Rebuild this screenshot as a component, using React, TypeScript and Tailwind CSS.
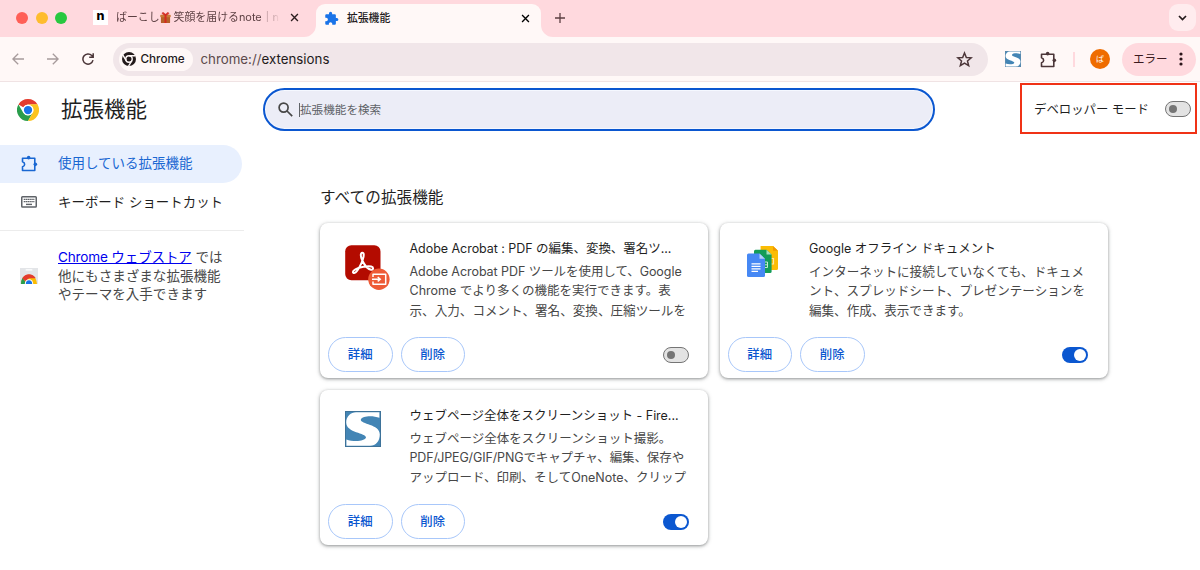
import React from "react";

const ChromeLogo = ({ className }: { className: string }) => (
  <svg viewBox="0 0 48 48" className={className}>
    <circle cx="24" cy="24" r="24" fill="#fff" />
    <path d="M24 0A24 24 0 0 1 44.8 12H24A12 12 0 0 0 13.6 18L3.2 12A24 24 0 0 1 24 0Z" fill="#e33b2e" />
    <path d="M3.2 12A24 24 0 0 0 24 48L34.4 30A12 12 0 0 1 13.6 30Z" fill="#2a9d4b" />
    <path d="M44.8 12A24 24 0 0 1 24 48L34.4 30A12 12 0 0 0 34.4 18L30 12Z" fill="#fcc31e" />
    <path d="M24 12H44.8A24 24 0 0 1 45 13L33 16Z" fill="#fcc31e" />
    <circle cx="24" cy="24" r="11.5" fill="#fff" />
    <circle cx="24" cy="24" r="9" fill="#1a73e8" />
  </svg>
);

const ChromeMono = () => (
  <svg viewBox="0 0 24 24" className="size-[14px] shrink-0">
    <circle cx="12" cy="12" r="12" fill="#231a1b" />
    <circle cx="12" cy="12" r="5.5" fill="none" stroke="#fff8f7" strokeWidth="2.4" />
    <path d="M12 6.4H23M7.2 14.9L1.6 5.2M16.8 14.9L11.3 24" stroke="#fff8f7" strokeWidth="2.4" fill="none" />
  </svg>
);

const PuzzleOutline = ({ className }: { className: string }) => (
  <svg viewBox="0 0 18 18" className={className}>
    <path
      d="M1.6 3.4H14.6V16.4H1.6V12.6C4.6 11.8 4.6 8 1.6 7.2Z"
      fill="none"
      stroke="currentColor"
      strokeWidth="1.7"
      strokeLinejoin="round"
    />
    <circle cx="8.1" cy="2.8" r="1.9" fill="currentColor" />
    <circle cx="15.2" cy="9.9" r="1.9" fill="currentColor" />
  </svg>
);

const PuzzleSolid = () => (
  <svg viewBox="0 0 24 24" className="size-[15px] shrink-0" fill="#1a73e8">
    <path d="M20.5 11H19V7c0-1.1-.9-2-2-2h-4V3.5a2.5 2.5 0 0 0-5 0V5H4c-1.1 0-1.99.9-1.99 2v3.8H3.5c1.49 0 2.7 1.21 2.7 2.7s-1.21 2.7-2.7 2.7H2V20c0 1.1.9 2 2 2h3.8v-1.5c0-1.49 1.21-2.7 2.7-2.7s2.7 1.21 2.7 2.7V22H17c1.1 0 2-.9 2-2v-4h1.5a2.5 2.5 0 0 0 0-5z" />
  </svg>
);

const Close = ({ className }: { className: string }) => (
  <svg viewBox="0 0 10 10" className={className} fill="none" stroke="currentColor" strokeWidth="1.5">
    <path d="M1.2 1.2L8.8 8.8M8.8 1.2L1.2 8.8" />
  </svg>
);

const Gift = () => (
  <svg viewBox="0 0 12 12" className="size-[11px] shrink-0">
    <rect x="1" y="4" width="10" height="8" rx=".6" fill="#b5622a" />
    <rect x=".4" y="3" width="11.2" height="2.6" rx=".5" fill="#c97a35" />
    <rect x="4.9" y="3" width="2.2" height="9" fill="#d42a20" />
    <path d="M6 3.2C2 3.4 1.6 .4 3.4 .5S6 3.2 6 3.2C6 3.2 7 .4 8.7 .5S10 3.4 6 3.2Z" fill="#e5342a" stroke="#b81e16" strokeWidth=".5" />
  </svg>
);

const FireShot = ({ className }: { className: string }) => (
  <svg viewBox="0 0 36 36" className={className}>
    <rect x=".5" y=".5" width="35" height="35" fill="#4385b5" stroke="#3d7299" />
    <path
      d="M34.4 1.2V6.8C28 4.4 17.4 4.6 15.8 8.6C15.4 13.6 34.8 13 34.8 23.5C34.8 30 31 34.8 25 34.8H1.4V28.4C8 31 20 30.6 21 26.6C21.4 21.8 1.2 22 1.2 11.5C1.2 5 6 1.2 11 1.2Z"
      fill="#fff"
    />
  </svg>
);

const Acrobat = () => (
  <svg viewBox="0 0 46 46" className="h-[46px] w-[46px]">
    <rect x=".2" y=".2" width="35.3" height="35" rx="6.2" fill="#b30b00" />
    <path
      d="M17.3 7.8C15.2 7.8 15.5 11.6 17.2 15.2C19.2 19.5 23 24 26 24.8C28.4 25.3 29 22.2 26.2 21.5C22.5 20.6 14.5 22.2 10.4 24.3C6.8 26.1 7.6 28.6 9.6 27.9C12.5 26.8 16.3 19.2 17.9 14.2C19 10.6 19.2 7.8 17.3 7.8Z"
      fill="none"
      stroke="#fff"
      strokeWidth="2"
    />
    <circle cx="33.9" cy="34.2" r="10.7" fill="#ee5b36" />
    <path d="M28 31.9V29.2H40.7V39.2H28V36.6" fill="none" stroke="#fff" strokeWidth="1.5" strokeLinejoin="round" />
    <path d="M27 34.2H34.7M32.7 32L35.3 34.2L32.7 36.4" fill="none" stroke="#fff" strokeWidth="1.4" />
  </svg>
);

const Docs = () => (
  <svg viewBox="0 0 32 32" className="h-8 w-8">
    <path d="M13.6 1H26L31 5.8V23.5Q31 25 29.5 25H15Q13.6 25 13.6 23.5Z" fill="#fbbc04" />
    <path d="M26 1L31 5.8H26Z" fill="#f29900" />
    <path d="M22 13.5H26.5V19H22Z" fill="none" stroke="#fde7a5" strokeWidth="1.2" />
    <path d="M8.4 4.8H19.5L24.6 9.6V26.5Q24.6 28 23.1 28H8.4Q7 28 7 26.5V6.3Q7 4.8 8.4 4.8Z" fill="#149c58" />
    <path d="M19.5 4.8L24.6 9.6H19.5Z" fill="#a5dfc0" />
    <path d="M16 17H20.5V22.5H16M16 19.8H20.5" fill="none" stroke="#c5e9d5" strokeWidth="1" />
    <path d="M1.5 8.5H12.5L18 13.8V30.5Q18 32 16.5 32H1.5Q0 32 0 30.5V10Q0 8.5 1.5 8.5Z" fill="#4688f4" />
    <path d="M12.5 8.5L18 13.8H12.5Z" fill="#b5d0fb" />
    <path d="M4.5 18.8H13.5M4.5 21.3H13.5M4.5 23.8H13.5M4.5 26.3H11" stroke="#fff" strokeWidth="1.2" />
  </svg>
);

const Keyboard = () => (
  <svg viewBox="0 0 16 12" className="h-3 w-4 shrink-0">
    <rect x=".75" y=".75" width="14.5" height="10.2" rx=".8" fill="none" stroke="#5f6368" strokeWidth="1.5" />
    <path d="M2.7 3.4H13.4M2.7 5.6H13.4" stroke="#5f6368" strokeWidth="1.3" strokeDasharray="1.5 .4" />
    <path d="M5 8.4H11" stroke="#5f6368" strokeWidth="1.4" />
  </svg>
);

const WebStore = () => (
  <svg viewBox="0 0 18 16" className="h-4 w-[18px] shrink-0">
    <path d="M0 0H18V16H0Z" fill="#e3e5e8" />
    <rect x="5.5" y="1.2" width="7" height="1.4" rx=".7" fill="#fff" />
    <path d="M1 16A8 9.6 0 0 1 17 16Z" fill="#fbbc04" />
    <path d="M1 16A8 9.6 0 0 1 2.6 9.8L7 16Z" fill="#2a9d4b" />
    <path d="M2.3 10.2A8 8.8 0 0 1 15.7 10.2H9L5.5 13.4Z" fill="#e33b2e" />
    <path d="M4.8 16A4.2 4.8 0 0 1 13.2 16Z" fill="#fff" />
    <path d="M5.8 16A3.2 3.8 0 0 1 12.2 16Z" fill="#1a73e8" />
  </svg>
);

const Toggle = ({ on }: { on: boolean }) =>
  on ? (
    <div className="flex h-4 w-[26px] items-center justify-end rounded-full bg-[#0b57d0] pr-[2px]">
      <div className="size-3 rounded-full bg-white" />
    </div>
  ) : (
    <div className="flex h-4 w-[26px] items-center rounded-full border border-[#757575] bg-[#e3e3e3] pl-[3px]">
      <div className="size-2 rounded-full bg-[#757575]" />
    </div>
  );

const PillButton = ({ label }: { label: string }) => (
  <button className="flex h-[35px] w-[64.5px] items-center justify-center rounded-full border border-[#a8c7fa] pt-[2px] text-[12.4px] font-medium text-[#0b57d0]">
    {label}
  </button>
);

type Line = { text: string; cls: string };

const Card = ({ icon, title, lines, on }: { icon: React.ReactNode; title: Line; lines: Line[]; on: boolean }) => (
  <article className="flex h-[155px] w-[388px] flex-col justify-between rounded-[8px] bg-white shadow-[0_1px_3px_rgba(60,64,67,0.45),0_1px_5px_rgba(60,64,67,0.2)]">
    <div className="flex pt-4 pl-[25px]">
      <div className="w-[64.5px] shrink-0 pt-[6px]">{icon}</div>
      <div className="whitespace-nowrap">
        <h3 className={`h-[23px] leading-[19px] text-[#1f1f1f] ${title.cls}`}>{title.text}</h3>
        {lines.map((l) => (
          <p key={l.text} className={`h-[19.3px] leading-[19.3px] text-[#474747] ${l.cls}`}>
            {l.text}
          </p>
        ))}
      </div>
    </div>
    <div className="flex items-center gap-2 pr-[19.5px] pb-[6px] pl-2">
      <PillButton label="詳細" />
      <PillButton label="削除" />
      <div className="ml-auto">
        <Toggle on={on} />
      </div>
    </div>
  </article>
);

export default function App() {
  return (
    <div className="flex h-[570px] w-[1200px] flex-col overflow-hidden bg-white font-['Inter','Noto_Sans_CJK_JP',sans-serif] text-[#1f1f1f]">
      <header className="shrink-0">
        <div className="flex h-[37px] items-end bg-[#ffd9de]">
          <div className="flex h-full w-[93px] items-center gap-[7.5px] pb-[2px] pl-4">
            <span className="size-3 rounded-full bg-[#ff5f57]" />
            <span className="size-3 rounded-full bg-[#febc2e]" />
            <span className="size-3 rounded-full bg-[#28c840]" />
          </div>
          <div className="flex h-full w-[211px] items-center pb-[2px]">
            <span className="flex size-[15px] items-center justify-center bg-white pb-[2px] text-[12.5px] leading-none font-extrabold text-black">n</span>
            <div className="ml-[8px] flex w-[164px] items-center overflow-hidden text-[10.9px] whitespace-nowrap text-[#5c3f42] [mask-image:linear-gradient(to_right,black_88%,transparent)]">
              <span>ばーこし</span>
              <Gift />
              <span className="ml-[3px]">笑顔を届けるnote｜n</span>
            </div>
            <Close className="ml-[10px] size-[9px] shrink-0 text-[#2b1d1e]" />
          </div>
          <div className="flex h-full items-end">
            <svg viewBox="0 0 12 12" className="size-3 text-[#fff8f7]" fill="currentColor">
              <path d="M12 0V12H0A12 12 0 0 0 12 0Z" />
            </svg>
            <div className="flex h-[33px] w-[225px] items-center rounded-t-[9px] bg-[#fff8f7] pr-[11px] pb-[5px] pl-2">
              <PuzzleSolid />
              <span className="ml-2 pt-[2px] text-[10.8px] font-medium text-[#231a1b]">拡張機能</span>
              <Close className="ml-auto size-[9px] text-black" />
            </div>
            <svg viewBox="0 0 12 12" className="size-3 text-[#fff8f7]" fill="currentColor">
              <path d="M0 0V12H12A12 12 0 0 1 0 0Z" />
            </svg>
          </div>
          <div className="flex h-full flex-1 items-center justify-between pr-1 pb-[2px] pl-[2px]">
            <svg viewBox="0 0 10 10" className="size-[10px] text-[#5c3f42]" fill="none" stroke="currentColor" strokeWidth="1.3">
              <path d="M5 0V10M0 5H10" />
            </svg>
            <div className="flex size-[27px] items-center justify-center rounded-[9px] bg-[#ffecee]">
              <svg viewBox="0 0 9 6" className="h-[6px] w-[9px]" fill="none" stroke="#231a1b" strokeWidth="1.7">
                <path d="M1 1L4.5 4.5L8 1" />
              </svg>
            </div>
          </div>
        </div>
        <div className="flex h-[45px] items-center border-b border-[#f0e3e4] bg-[#fff8f7] pr-1">
          <div className="flex w-[113px] items-center gap-[23px] pl-[11.5px]">
            <svg viewBox="0 0 12 12" className="size-3 text-[#a79b9c]" fill="none" stroke="currentColor" strokeWidth="1.3">
              <path d="M12 6H1M6.2 .7L.9 6L6.2 11.3" />
            </svg>
            <svg viewBox="0 0 12 12" className="size-3 text-[#a79b9c]" fill="none" stroke="currentColor" strokeWidth="1.3">
              <path d="M0 6H11M5.8 .7L11.1 6L5.8 11.3" />
            </svg>
            <svg viewBox="0 0 12 12" className="size-3 text-[#4c3639]" fill="none" stroke="currentColor" strokeWidth="1.5">
              <path d="M11 7.2A5.1 5.1 0 1 1 9.8 2.6L11 4M11.2 .2V4.3H7.2" />
            </svg>
          </div>
          <div className="flex h-[33px] w-[875px] items-center rounded-full bg-[#f1e6e9] pr-[15px] pl-[6px]">
            <div className="flex h-[23px] w-[74px] items-center gap-[4.5px] rounded-full bg-[#fff8f7] pl-[3px]">
              <ChromeMono />
              <span className="pt-[2px] text-[11.7px] font-medium text-[#231a1b]">Chrome</span>
            </div>
            <span className="ml-[7.5px] pt-[1px] text-[13.3px] whitespace-nowrap text-[#5c4a4c]">
              chrome://<span className="text-[#231a1b]">extensions</span>
            </span>
            <svg viewBox="0 0 24 24" className="ml-auto size-[17px] text-[#4c3639]" fill="none" stroke="currentColor" strokeWidth="2.1">
              <path d="M12 2.8L14.6 9.2L21.5 9.7L16.2 14.1L17.9 20.8L12 17.1L6.1 20.8L7.8 14.1L2.5 9.7L9.4 9.2Z" />
            </svg>
          </div>
          <FireShot className="ml-[17px] size-4 shrink-0" />
          <PuzzleOutline className="ml-[19px] size-[17px] shrink-0 text-[#4c3639]" />
          <span className="ml-[16px] h-[15px] w-[2px] shrink-0 bg-[#ffd9de]" />
          <span className="ml-[15px] flex size-5 shrink-0 items-center justify-center rounded-full bg-[#ef6c00] text-[8px] text-white">ば</span>
          <div className="ml-auto flex h-[33px] w-[74px] shrink-0 items-center justify-between rounded-full bg-[#ffd9de] pr-[13px] pl-[11px]">
            <span className="pt-[1px] text-[11.5px] whitespace-nowrap text-[#3b1a20]">エラー</span>
            <svg viewBox="0 0 4 14" className="h-[14px] w-1" fill="#2b151a">
              <circle cx="2" cy="2" r="1.6" />
              <circle cx="2" cy="7" r="1.6" />
              <circle cx="2" cy="12" r="1.6" />
            </svg>
          </div>
        </div>
      </header>

      <div className="flex h-[55px] shrink-0">
        <div className="flex w-[263px] items-center pl-[17px]">
          <ChromeLogo className="size-[22px]" />
          <h1 className="ml-[22px] pt-[1px] text-[21.5px] leading-none">拡張機能</h1>
        </div>
        <div className="mt-[6px] flex h-[43px] w-[672px] items-center rounded-full border-2 border-[#0b57d0] bg-[#ecedf7] pl-[13px] shadow-[inset_0_0_0_1px_#f5f8ff]">
          <svg viewBox="0 0 15 15" className="size-[15px] text-[#474747]" fill="none" stroke="currentColor" strokeWidth="1.7">
            <circle cx="5.6" cy="5.6" r="4.5" />
            <path d="M9 9L14.2 14.2" />
          </svg>
          <span className="ml-[6px] h-[14px] w-px bg-[#5f6368]" />
          <span className="pt-[2px] text-[11.6px] text-[#5f6368]">拡張機能を検索</span>
        </div>
        <div className="mt-[1px] ml-[85px] flex h-[51px] w-[177px] items-center justify-between border-2 border-[#f03216] pr-[4px] pl-3">
          <span className="pt-[3px] text-[12.4px] whitespace-nowrap">デベロッパー モード</span>
          <div className="pt-px">
            <Toggle on={false} />
          </div>
        </div>
      </div>

      <div className="flex flex-1">
        <nav className="w-[320px] shrink-0 pt-2 whitespace-nowrap">
          <div className="flex h-[38px] w-[242px] items-center rounded-r-full bg-[#e8f0fe] pb-[2px] pl-[21px] text-[#1967d2]">
            <PuzzleOutline className="size-[17px]" />
            <span className="ml-5 text-[13.5px]">使用している拡張機能</span>
          </div>
          <div className="flex h-[38px] items-center pl-[21px]">
            <Keyboard />
            <span className="ml-[21px] text-[13.45px] text-[#1f1f1f]">キーボード ショートカット</span>
          </div>
          <div className="mt-[9px] w-[244px] border-t border-[#ececec]" />
          <div className="mt-[17px] flex items-center pl-5">
            <WebStore />
            <p className="ml-5 text-[13.55px] leading-[18.5px] text-[#474747]">
              <a className="tracking-[-0.16px] text-[#0000ee] underline">Chrome ウェブストア</a> では
              <br />
              他にもさまざまな拡張機能
              <br />
              やテーマを入手できます
            </p>
          </div>
        </nav>
        <main className="pt-[51px]">
          <h2 className="h-[35px] text-[15.6px] leading-[20px] tracking-[0.06px]">すべての拡張機能</h2>
          <div className="grid grid-cols-[388px_388px] gap-x-[11.5px] gap-y-3">
            <Card
              icon={<Acrobat />}
              on={false}
              title={{ text: "Adobe Acrobat : PDF の編集、変換、署名ツ...", cls: "text-[12.5px] tracking-[-0.04px]" }}
              lines={[
                { text: "Adobe Acrobat PDF ツールを使用して、Google", cls: "text-[12.5px] tracking-[-0.06px]" },
                { text: "Chrome でより多くの機能を実行できます。表", cls: "text-[12.5px]" },
                { text: "示、入力、コメント、署名、変換、圧縮ツールを", cls: "text-[12.58px]" },
              ]}
            />
            <Card
              icon={<div className="pl-[2px]"><Docs /></div>}
              on
              title={{ text: "Google オフライン ドキュメント", cls: "text-[12.5px]" }}
              lines={[
                { text: "インターネットに接続していなくても、ドキュメ", cls: "text-[12.58px]" },
                { text: "ント、スプレッドシート、プレゼンテーションを", cls: "text-[12.58px]" },
                { text: "編集、作成、表示できます。", cls: "text-[12.55px]" },
              ]}
            />
            <Card
              icon={<FireShot className="-mt-px size-[36px]" />}
              on
              title={{ text: "ウェブページ全体をスクリーンショット - Fire...", cls: "text-[12.5px] tracking-[-0.03px]" }}
              lines={[
                { text: "ウェブページ全体をスクリーンショット撮影。", cls: "text-[12.5px]" },
                { text: "PDF/JPEG/GIF/PNGでキャプチャ、編集、保存や", cls: "text-[12.5px] tracking-[-0.12px]" },
                { text: "アップロード、印刷、そしてOneNote、クリップ", cls: "text-[12.5px]" },
              ]}
            />
          </div>
        </main>
      </div>
    </div>
  );
}
